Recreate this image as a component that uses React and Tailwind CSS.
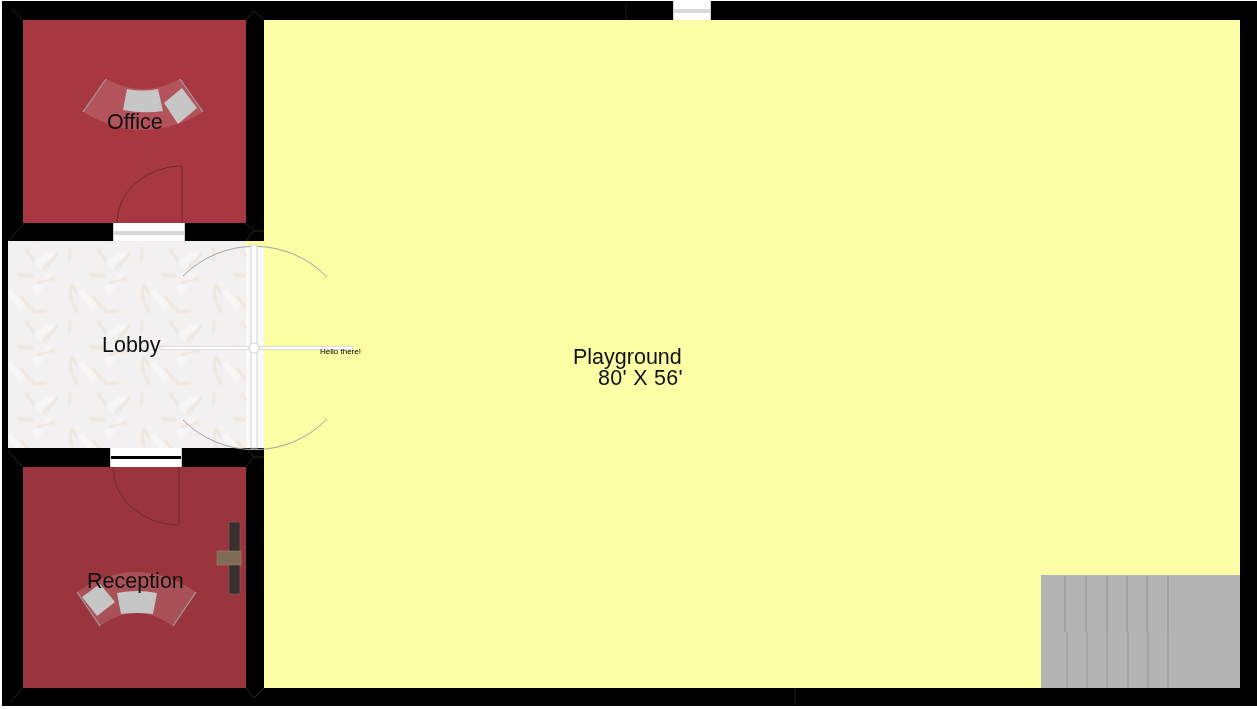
const font = { fontFamily: '"Liberation Sans", Arial, sans-serif' };

// marble tile: soft tan veins on a pale grey ground, repeated every 72px
// the svg overhangs its clip by 4px so the blur has no dark rim
const Marble = () => (
  <svg className="absolute -left-[4px] -top-[4px] h-[215px] w-[246px] blur-[0.8px]" aria-hidden="true">
    <defs>
      <pattern id="marble" x="-4" y="4" width="72" height="72" patternUnits="userSpaceOnUse">
        <rect width="72" height="72" fill="#f3f0f1" />
        <path d="M36 22 L54 14 M8 50 L22 66 M34 50 L52 34" stroke="#f8f7f7" strokeWidth="7" fill="none" />
        <path d="M25 9 L35 20 M58 12 L43 29 M17 34 L33 35 M37 42 L55 37 M70 7 L69 20 M70 54 L72 44 M0 44 L6 54 M70 54 L72 62 M0 62 L6 72 M20 55 L35 72 M35 71 L47 70" stroke="#e8d8c6" strokeWidth="1.3" fill="none" />
      </pattern>
    </defs>
    <rect width="100%" height="100%" fill="url(#marble)" />
  </svg>
);

const DoorGap = ({ w, dark }) => (
  <div className={`relative h-full border-x border-[#cfcfcf] bg-white ${w}`}>
    <div className={`absolute inset-x-0 top-[8px] ${dark ? 'h-[3px] bg-black' : 'h-[4px] bg-[#d8d8d8]'}`}></div>
  </div>
);

// stairs: a flat grey block with soft step shadows
const Stairs = () => (
  <div className="h-[113px] w-[199px] bg-[#b3b3b3]">
    <svg width="199" height="113" aria-hidden="true">
      {[24, 45, 66, 86, 106, 127].map((x) => (
        <line key={x} x1={x} y1="1" x2={x} y2="57" stroke="#a2a2a2" strokeWidth="2" />
      ))}
      {[26, 46, 66, 87, 107, 127].map((x) => (
        <line key={x} x1={x} y1="57" x2={x} y2="113" stroke="#a5a5a5" strokeWidth="2" />
      ))}
    </svg>
  </div>
);

const Overlay = () => (
  <svg className="pointer-events-none absolute inset-0" width="1257" height="709" aria-hidden="true">
    {/* wall corner joints */}
    <g stroke="#3c3c20" strokeWidth="0.7" fill="none">
      <path d="M12 9 L23 20 M246 20 L254 11 L264 20 M8 241 L23 225 M246 223 L254 231 L264 231 M246 241 L254 231" />
      <path d="M8 451 L23 467 M246 467 L254 457 L264 457 M246 448 L254 457 M23 688 L10 702 M246 688 L254 698 L264 688" />
      <path d="M626 2 L626 20 M795 688 L795 705" stroke="#2c2c2c" />
    </g>
    {/* office sofa */}
    <path d="M106 79 Q143 99 180 79 L203 112 Q143 148 83 112 Z" fill="#ffffff" fillOpacity="0.14" />
    <path d="M106 79 L83 112 M180 79 L203 112" stroke="#a0a0a0" strokeWidth="1.2" />
    <path d="M127 89 Q143 92 158 89 L163 111 Q143 114 123 110 Z" fill="#c6c6c6" />
    <path d="M182 88 L197 108 L178 124 L164 103 Z" fill="#c6c6c6" />
    {/* reception sofa */}
    <path d="M77 592 Q136 552 196 592 L173 626 Q136 600 100 626 Z" fill="#ffffff" fillOpacity="0.14" />
    <path d="M77 592 L100 626 M196 592 L173 626" stroke="#a0a0a0" strokeWidth="1.2" />
    <path d="M117 593 Q137 589 157 593 L153 614 Q137 612 121 614 Z" fill="#c6c6c6" />
    <path d="M100 584 L115 602 L97 616 L82 597 Z" fill="#c6c6c6" />
    {/* reception desk */}
    <rect x="229" y="522" width="11" height="72" fill="#3a2e2e" stroke="#85696b" strokeWidth="0.5" />
    <rect x="217" y="551" width="24" height="14" fill="#7f6b56" stroke="#a98a80" strokeWidth="0.5" />
    {/* office and reception doors */}
    <path d="M117 223 A 65 57 0 0 1 182 166 L182 223" stroke="#6e2a30" strokeWidth="1" fill="none" />
    <path d="M113 467 A 66 58 0 0 0 179 525 L179 467" stroke="#6e2a30" strokeWidth="1" fill="none" />
    {/* main double door */}
    <path d="M183 276 A 101 101 0 0 1 327 277 M183 420 A 101 101 0 0 0 327 419" stroke="#a3a3a3" strokeWidth="1" fill="none" />
    <rect x="251" y="245" width="6" height="203" fill="#ffffff" stroke="#d4d4d4" strokeWidth="1" />
    <rect x="160" y="346.5" width="193" height="3" fill="#ffffff" stroke="#d4d4d4" strokeWidth="0.8" />
    <circle cx="254" cy="348" r="5" fill="#ffffff" stroke="#cfcfcf" strokeWidth="1" />
  </svg>
);

export default function App() {
  return (
    <div className="relative h-[709px] w-[1257px] overflow-hidden bg-white pb-[3px] pl-[2px] pt-px text-[21.5px] leading-none text-[#111] blur-[0.4px]" style={font}>
      <div className="flex h-full bg-black">
        {/* left rooms */}
        <div className="flex w-[262px] flex-col">
          <div className="h-[19px]"></div>
          <div className="ml-[21px] h-[203px] w-[223px] bg-[#a73740]"></div>
          <div className="flex h-[18px] pl-[111px]"><DoorGap w="w-[72px]" /></div>
          <div className="flex h-[207px]">
            <div className="relative ml-[6px] w-[238px] overflow-hidden bg-[#f3f0f1]">
              <Marble />
            </div>
            <div className="flex w-[18px] flex-col bg-[#f9f9f7]">
              <div className="h-[6px] bg-[#fbfea4]"></div>
            </div>
          </div>
          <div className="flex h-[19px] pl-[108px]"><DoorGap w="w-[72px]" dark /></div>
          <div className="ml-[21px] h-[221px] w-[223px] bg-[#9a353d]"></div>
          <div className="flex-1"></div>
        </div>

        {/* playground */}
        <div className="mr-[17px] flex flex-1 flex-col">
          <div className="flex h-[19px] pl-[409px]"><DoorGap w="w-[38px]" /></div>
          <div className="flex flex-1 items-end justify-end bg-[#fbfea4]">
            <Stairs />
          </div>
          <div className="h-[18px]"></div>
        </div>
      </div>

      <Overlay />

      {/* labels sit over the plan */}
      <span className="absolute left-[107px] top-[112px]">Office</span>
      <span className="absolute left-[102px] top-[335px]">Lobby</span>
      <span className="absolute left-[87px] top-[571px]">Reception</span>
      <div className="absolute left-[573px] top-[347px] whitespace-nowrap leading-[21px]">
        <div>Playground</div>
        <div className="pl-[25px] tracking-[0.3px]">80' X 56'</div>
      </div>
      <span className="absolute left-[320px] top-[348px] whitespace-nowrap text-[8px] text-black">Hello there!</span>
    </div>
  );
}
